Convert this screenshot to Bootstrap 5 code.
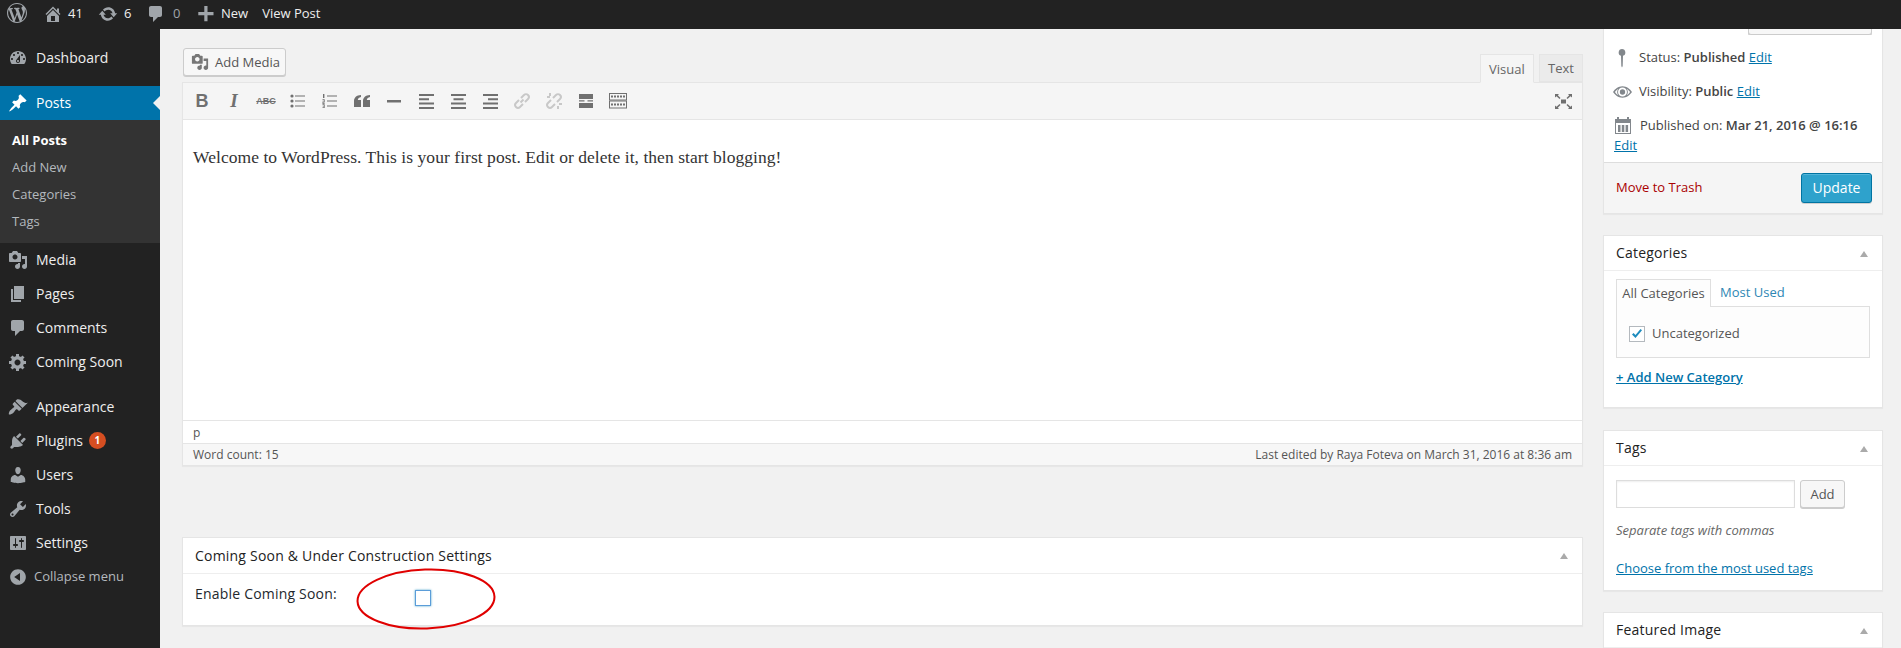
<!DOCTYPE html>
<html lang="en">
<head>
<meta charset="utf-8">
<title>Edit Post</title>
<link href="https://cdn.jsdelivr.net/npm/bootstrap@5.3.0/dist/css/bootstrap.min.css" rel="stylesheet">
<style>
html,body{height:648px;overflow:hidden;background:#f1f1f1;font-family:"Open Sans","Noto Sans",sans-serif;font-size:13px;color:#444}
svg{fill:currentColor;flex:none;display:block}
a{color:#0073aa}
.wp-top{height:29px;background:#222;color:#eee;font-size:13px;line-height:27px}
.wp-top .ti{color:#a0a5aa}
.wp-logo{margin:3px 16px 0 7px}
.wp-top .slot{display:flex;align-items:center;height:27px}
.wp-shell{height:619px}
.wp-side{width:160px;background:#222;flex:none;padding-top:12px}
.mi{height:34px;color:#eee;font-size:14px;padding:0 0 1px 36px;position:relative}
.mi svg{position:absolute;left:8px;top:7px;color:#a0a5aa}
.mi.sep{margin-bottom:11px}
.mi.cur{background:#0073aa;color:#fff}
.mi.cur svg{color:#fff}
.mi.cur::after{content:"";position:absolute;right:0;top:10px;border:7px solid transparent;border-right-color:#f1f1f1;border-left:0}
.subm{background:#333;color:#b4b9be;padding:7px 0 9px;height:123px}
.subm div{height:27px;line-height:26px;padding-left:12px}
.subm .on{color:#fff;font-weight:700}
.bub{width:17px;height:17px;border-radius:50%;background:#d54e21;color:#fff;font-size:10px;font-weight:700;line-height:17px;text-align:center;margin-left:6px}
.mi.coll{color:#b4b9be;font-size:13px;padding:0 0 0 34px}
.wp-main{padding:0 18px 0 22px;gap:20px;min-width:0}
.left-col{flex:1;min-width:0}
.right-col{width:280px;flex:none}
.top-row{height:34px;margin-top:19px}
.wbtn{height:28px;font-size:13px;line-height:26px;padding:0 9px;color:#555;background:#f7f7f7;border:1px solid #ccc;border-radius:3px;box-shadow:0 1px 0 #ccc}
.wbtn:hover{background:#f7f7f7}
.add-media{width:103px;padding:0 0 0 7px;gap:6px;align-self:flex-start;margin-left:1px}
.add-media svg{color:#777}
.etab{height:29px;line-height:28px;font-size:13px;color:#666;border:1px solid #e5e5e5;padding:0 8px;background:#ebebeb}
.etab.act{background:#f5f5f5;border-bottom-color:#f5f5f5;width:54px;height:29px;margin-right:5px;margin-bottom:-1px;position:relative;z-index:2}
.etab.off{width:44px;height:28px;line-height:27px}
.edit-box{background:#fff;border:1px solid #e5e5e5;border-radius:0;box-shadow:0 1px 1px rgba(0,0,0,.04)}
.tbar{height:37px;background:#f5f5f5;border-bottom:1px solid #e5e5e5;color:#707070;padding:0 10px 0 3px}
.tb{width:32px;height:20px;flex:none;display:flex;justify-content:center;align-items:center}
.tb.dim{color:#c8c8c8}
.tb-b{font:700 18px "Liberation Sans",sans-serif;color:#707070}
.tb-i{font:italic 700 19px "Liberation Serif",serif;color:#707070}
.tb-s{font:700 9px "Liberation Sans",sans-serif;text-decoration:line-through;color:#707070}
.edit-area{height:300px;padding:24px 10px 0;font:17.5px/26px "Liberation Serif",serif;letter-spacing:.05px;color:#333;margin:0}
.pth{height:23px;border-top:1px solid #e5e5e5;padding-left:10px;font-size:12px;line-height:24px;color:#555}
.stat{height:22px;background:#f7f7f7;border-top:1px solid #e5e5e5;padding:0 10px;font-size:12px;line-height:21px;color:#555}
.wpanel{border:1px solid #e5e5e5;border-radius:0;background:#fff;box-shadow:0 1px 1px rgba(0,0,0,.04)}
.p-head{height:35px;padding:0 12px 1px;border-bottom:1px solid #eee;font-size:14px;color:#222;font-weight:500;letter-spacing:.21px}
.caret-up{width:0;height:0;border:4px solid transparent;border-top:0;border-bottom:6px solid #aaa;margin:2px 2px 0 0}
.cs-box{margin-top:71px;height:89px;position:relative}
.cs-box .p-head{height:36px}
.cs-body{padding:9px 12px;color:#23282d;font-size:14px;font-weight:500;letter-spacing:.2px;line-height:22px}
.oval{position:absolute;left:172px;top:30px}
.cbx{width:16px;height:16px;border:1px solid #5b9dd9;box-shadow:0 0 2px rgba(30,140,190,.8);background:#fff;display:block;flex:none}
.cbx-row{padding-left:30px;padding-top:7px}
.pub{height:185px;margin-bottom:21px;border-top:0}
.pclip{height:6px;overflow:hidden;padding-right:10px;justify-content:flex-end;align-items:flex-end;display:flex}
.pclip .wbtn{width:124px;flex:none;font-size:13px;text-align:center;padding:0}
.prow{height:34px;padding-left:8px}
.pr0{margin-top:6px}
.ico-w{width:20px;display:flex;justify-content:center;margin-right:7px;color:#82878c}
.pub b{font-weight:600}
.pdate{padding:6px 10px 0;line-height:20px;height:53px}
.pdate .d1{display:flex;align-items:center}
.pact{height:51px;background:#f5f5f5;border-top:1px solid #ddd;padding:0 10px 0 12px}
.trash{color:#a00;text-decoration:none}
.upd{width:71px;height:30px;background:#2ea2cc;border:1px solid #0074a2;border-radius:3px;color:#fff;font-size:14px;line-height:28px;padding:0;box-shadow:inset 0 1px 0 rgba(120,200,230,.5),0 1px 0 rgba(0,0,0,.15)}
.upd:hover{background:#2ea2cc;color:#fff;border-color:#0074a2}
.cat{height:173px;margin-bottom:22px}
.pbody{padding:8px 12px 0}
.ctabs{height:28px}
.ctab{height:28px;line-height:27px;padding:0 5px;width:95px;text-align:center;border:1px solid #dfdfdf;border-bottom:0;background:#fdfdfd;color:#555;position:relative;z-index:1;margin-bottom:-1px}
.ctab2{padding-left:9px;line-height:27px;color:#2e87b4;text-decoration:none}
.cbox{height:52px;background:#fdfdfd;border:1px solid #dfdfdf;padding:3px 12px 0;gap:7px;color:#555;margin-top:-1px;width:254px}
.cchk{width:16px;height:16px;border:1px solid #b4b9be;background:#fff;color:#1e8cbe;flex:none}
.addcat{font-weight:600;display:block;margin-top:9px;line-height:20px}
.tagp{height:161px;margin-bottom:21px}
.tagp .pbody{padding-top:14px}
.tagin{width:179px;height:28px;border:1px solid #ddd;background:#fff;box-shadow:inset 0 1px 2px rgba(0,0,0,.07)}
.addb{width:45px;padding:0;text-align:center;margin-left:5px}
.hint{font-style:italic;color:#666;margin:12px 0 0;line-height:20px}
.choose{display:block;margin-top:18px;line-height:20px}
.feat{height:80px}
</style>
</head>
<body>
<div class="wp-top d-flex">
  <svg class="wp-logo" width="20" height="20" viewBox="0 0 20 20" style="color:#a0a5aa"><path d="M20 10c0-5.51-4.49-10-10-10C4.48 0 0 4.49 0 10c0 5.52 4.48 10 10 10 5.51 0 10-4.48 10-10zM7.78 15.37L4.37 6.22c.55-.02 1.17-.08 1.17-.08.5-.06.44-1.13-.06-1.11 0 0-1.45.11-2.37.11-.18 0-.37 0-.58-.01C4.12 2.69 6.87 1.11 10 1.11c2.33 0 4.45.87 6.05 2.34-.68-.11-1.65.39-1.65 1.58 0 .74.45 1.36.9 2.1.35.61.55 1.36.55 2.46 0 1.49-1.4 5-1.4 5l-3.03-8.37c.54-.02.82-.17.82-.17.5-.05.44-1.25-.06-1.22 0 0-1.44.12-2.38.12-.87 0-2.33-.12-2.33-.12-.5-.03-.56 1.2-.06 1.22l.92.08 1.26 3.41zM17.41 10c.24-.64.74-1.87.43-4.25.7 1.29 1.05 2.71 1.05 4.25 0 3.29-1.73 6.24-4.4 7.78.97-2.59 1.94-5.2 2.92-7.78zM6.1 18.09C3.12 16.65 1.11 13.53 1.11 10c0-1.3.23-2.48.72-3.59C3.25 10.3 4.67 14.2 6.1 18.09zm4.03-6.63l2.58 6.98c-.86.29-1.76.45-2.71.45-.79 0-1.57-.11-2.29-.33.81-2.38 1.62-4.74 2.42-7.1z"/></svg>
  <div class="slot ti"><svg width="20" height="20" viewBox="0 0 20 20"><path d="M16 8.5l1.53 1.53-1.06 1.06L10 4.62l-6.47 6.47-1.06-1.06L10 2.5l4 4v-2h2v4zm-6-2.46l6 5.99V18H4v-5.97zM12 17v-5H8v5h4z"/></svg></div>
  <div class="slot" style="margin-left:5px;width:30px">41</div>
  <div class="slot ti"><svg width="20" height="20" viewBox="0 0 20 20"><path d="M10.2 3.28c3.53 0 6.43 2.61 6.92 6h2.08l-3.5 4-3.5-4h2.32c-.45-1.97-2.21-3.45-4.32-3.45-1.45 0-2.73.71-3.54 1.78L4.95 5.66C6.23 4.2 8.11 3.28 10.2 3.28zm-.4 13.44c-3.52 0-6.43-2.61-6.92-6H.8l3.5-4c1.17 1.33 2.33 2.67 3.5 4H5.48c.45 1.97 2.21 3.45 4.32 3.45 1.45 0 2.73-.71 3.54-1.78l1.71 1.95c-1.28 1.46-3.15 2.38-5.25 2.38z"/></svg></div>
  <div class="slot" style="margin-left:6px;width:22px">6</div>
  <div class="slot ti"><svg width="20" height="20" viewBox="0 0 20 20"><path d="M5 2h9c1.1 0 2 .9 2 2v7c0 1.1-.9 2-2 2h-2l-5 5v-5H5c-1.1 0-2-.9-2-2V4c0-1.1.9-2 2-2z"/></svg></div>
  <div class="slot ti" style="margin-left:7px;width:23px">0</div>
  <div class="slot ti"><svg width="20" height="20" viewBox="0 0 20 20"><path d="M17.5 8v3.2h-6v6H8.3v-6h-6V8h6V2h3.2v6z"/></svg></div>
  <div class="slot" style="margin-left:5px">New</div>
  <div class="slot" style="margin-left:14px">View Post</div>
</div>
<div class="wp-shell d-flex">
  <nav class="wp-side">
    <div class="mi sep d-flex align-items-center"><svg width="20" height="20" viewBox="0 0 20 20"><path d="M3.76 16h12.48c1.1-1.37 1.76-3.11 1.76-5 0-4.42-3.58-8-8-8s-8 3.58-8 8c0 1.89.66 3.63 1.76 5zM10 4c.55 0 1 .45 1 1s-.45 1-1 1-1-.45-1-1 .45-1 1-1zM6 6c.55 0 1 .45 1 1s-.45 1-1 1-1-.45-1-1 .45-1 1-1zm8 0c.55 0 1 .45 1 1s-.45 1-1 1-1-.45-1-1 .45-1 1-1zm-5.37 5.55L12 7v6c0 1.1-.9 2-2 2s-2-.9-2-2c0-.57.24-1.08.63-1.45zM4 10c.55 0 1 .45 1 1s-.45 1-1 1-1-.45-1-1 .45-1 1-1zm12 0c.55 0 1 .45 1 1s-.45 1-1 1-1-.45-1-1 .45-1 1-1zm-5 3c0-.55-.45-1-1-1s-1 .45-1 1 .45 1 1 1 1-.45 1-1z"/></svg>Dashboard</div>
    <div class="mi cur d-flex align-items-center"><svg width="20" height="20" viewBox="0 0 20 20"><path d="M10.44 3.02l1.82-1.82 6.36 6.35-1.83 1.82c-1.05-.68-2.48-.57-3.41.36l-.75.75c-.92.93-1.04 2.35-.35 3.41l-1.83 1.82-2.41-2.41-2.8 2.79c-.42.42-3.38 2.71-3.8 2.29s1.86-3.39 2.28-3.81l2.79-2.79L4.1 9.36l1.83-1.82c1.05.69 2.48.57 3.4-.36l.75-.75c.93-.92 1.05-2.35.36-3.41z"/></svg>Posts</div>
    <div class="subm"><div class="on">All Posts</div><div>Add New</div><div>Categories</div><div>Tags</div></div>
    <div class="mi d-flex align-items-center"><svg width="20" height="20" viewBox="0 0 20 20"><path d="M13 11V4c0-.55-.45-1-1-1h-1.67L9 1H5L3.67 3H2c-.55 0-1 .45-1 1v7c0 .55.45 1 1 1h10c.55 0 1-.45 1-1zM7 4.5c1.38 0 2.5 1.12 2.5 2.5S8.38 9.5 7 9.5 4.5 8.38 4.5 7 5.62 4.5 7 4.5zM14 6h5v10.5c0 1.38-1.12 2.5-2.5 2.5S14 17.88 14 16.5s1.12-2.5 2.5-2.5c.17 0 .34.02.5.05V9h-3V6zm-4 8.05V13h2v3.5c0 1.38-1.12 2.5-2.5 2.5S7 17.88 7 16.5 8.12 14 9.5 14c.17 0 .34.02.5.05z"/></svg>Media</div>
    <div class="mi d-flex align-items-center"><svg width="20" height="20" viewBox="0 0 20 20"><path d="M6 15V2h10v13H6zm-1 1h8v2H3V5h2v11z"/></svg>Pages</div>
    <div class="mi d-flex align-items-center"><svg width="20" height="20" viewBox="0 0 20 20"><path d="M5 2h9c1.1 0 2 .9 2 2v7c0 1.1-.9 2-2 2h-2l-5 5v-5H5c-1.1 0-2-.9-2-2V4c0-1.1.9-2 2-2z"/></svg>Comments</div>
    <div class="mi sep d-flex align-items-center"><svg width="20" height="20" viewBox="0 0 20 20"><path d="M18 12h-2.18c-.17.7-.44 1.35-.81 1.93l1.54 1.54-2.1 2.1-1.54-1.54c-.58.36-1.23.63-1.91.79V19H8v-2.18c-.68-.16-1.33-.43-1.91-.79l-1.54 1.54-2.12-2.12 1.54-1.54c-.36-.58-.63-1.23-.79-1.91H1V9.03h2.17c.16-.7.44-1.35.8-1.94L2.43 5.55l2.1-2.1 1.54 1.54c.58-.37 1.24-.64 1.93-.81V2h3v2.18c.68.16 1.33.43 1.91.79l1.54-1.54 2.12 2.12-1.54 1.54c.36.59.64 1.24.8 1.94H18V12zm-8.5 1.5c1.66 0 3-1.34 3-3s-1.34-3-3-3-3 1.34-3 3 1.34 3 3 3z"/></svg>Coming Soon</div>
    <div class="mi d-flex align-items-center"><svg width="20" height="20" viewBox="0 0 20 20"><path d="M14.48 11.06L7.41 3.99l1.5-1.5c.5-.56 2.3-.47 3.51.32 1.21.8 1.43 1.28 2.91 2.1 1.18.64 2.45 1.26 4.45.85zm-.71.71L6.7 4.7 4.93 6.47c-.39.39-.39 1.02 0 1.41l1.06 1.06c.39.39.39 1.03 0 1.42-.6.6-1.43 1.11-2.21 1.69-.35.26-.7.53-1.01.84C1.43 13.23.4 17.08 1.07 17.5c.67.42 3.21-.64 4.35-1.78.32-.31.58-.66.84-1.01.58-.78 1.09-1.61 1.69-2.21.39-.39 1.02-.39 1.41 0l1.06 1.06c.39.39 1.02.39 1.41 0z"/></svg>Appearance</div>
    <div class="mi d-flex align-items-center"><svg width="20" height="20" viewBox="0 0 20 20"><path d="M13.11 4.36L9.87 7.6 8 5.73l3.24-3.24c.35-.34 1.05-.2 1.56.32.52.51.66 1.21.31 1.55zm-8 1.77l.91-1.12 9.01 9.01-1.19.84c-.71.71-2.63 1.16-3.82 1.16H6.14L4.9 17.26c-.59.59-1.54.59-2.12 0-.59-.58-.59-1.53 0-2.12l1.24-1.24v-3.88c0-1.13.4-3.19 1.09-3.89zm7.26 3.97l3.24-3.24c.34-.35 1.04-.21 1.55.31.52.51.66 1.21.31 1.55l-3.24 3.25z"/></svg>Plugins<span class="bub">1</span></div>
    <div class="mi d-flex align-items-center"><svg width="20" height="20" viewBox="0 0 20 20"><path d="M10 9.25c-2.27 0-2.73-3.44-2.73-3.44C7 4.02 7.82 2 9.97 2c2.16 0 2.98 2.02 2.71 3.81 0 0-.41 3.44-2.68 3.44zm0 2.57L12.72 10c2.39 0 4.52 2.33 4.52 4.53v2.49s-3.65 1.13-7.24 1.13c-3.65 0-7.24-1.13-7.24-1.13v-2.49c0-2.25 1.94-4.48 4.47-4.48z"/></svg>Users</div>
    <div class="mi d-flex align-items-center"><svg width="20" height="20" viewBox="0 0 20 20"><path d="M16.68 9.77c-1.34 1.34-3.3 1.67-4.95.99l-5.41 6.52c-.99.99-2.59.99-3.58 0s-.99-2.59 0-3.57l6.52-5.42c-.68-1.65-.35-3.61.99-4.95 1.28-1.28 3.12-1.62 4.72-1.06l-2.89 2.89 2.82 2.82 2.86-2.87c.53 1.58.18 3.39-1.08 4.67zM3.81 16.21c.4.39 1.04.39 1.43 0 .4-.4.4-1.04 0-1.43-.39-.4-1.03-.4-1.43 0-.39.39-.39 1.03 0 1.43z"/></svg>Tools</div>
    <div class="mi d-flex align-items-center"><svg width="20" height="20" viewBox="0 0 20 20"><path d="M18 16V4c0-.55-.45-1-1-1H3c-.55 0-1 .45-1 1v12c0 .55.45 1 1 1h14c.55 0 1-.45 1-1zM8 11h1c.55 0 1 .45 1 1s-.45 1-1 1H8v1.5c0 .28-.22.5-.5.5s-.5-.22-.5-.5V13H6c-.55 0-1-.45-1-1s.45-1 1-1h1V5.5c0-.28.22-.5.5-.5s.5.22.5.5V11zm5-2h-1c-.55 0-1-.45-1-1s.45-1 1-1h1V5.5c0-.28.22-.5.5-.5s.5.22.5.5V7h1c.55 0 1 .45 1 1s-.45 1-1 1h-1v5.5c0 .28-.22.5-.5.5s-.5-.22-.5-.5V9z"/></svg>Settings</div>
    <div class="mi coll d-flex align-items-center"><svg width="20" height="20" viewBox="0 0 20 20"><path d="M10 2.16c4.33 0 7.84 3.51 7.84 7.84s-3.51 7.84-7.84 7.84S2.16 14.33 2.16 10 5.71 2.16 10 2.16zm2 11.72V6.12L6.18 9.97z"/></svg>Collapse menu</div>
  </nav>
  <main class="wp-main d-flex flex-grow-1">
    <div class="left-col">
      <div class="top-row d-flex justify-content-between align-items-end">
        <button class="btn wbtn add-media d-flex align-items-center" type="button"><svg width="18" height="18" viewBox="0 0 20 20"><path d="M13 11V4c0-.55-.45-1-1-1h-1.67L9 1H5L3.67 3H2c-.55 0-1 .45-1 1v7c0 .55.45 1 1 1h10c.55 0 1-.45 1-1zM7 4.5c1.38 0 2.5 1.12 2.5 2.5S8.38 9.5 7 9.5 4.5 8.38 4.5 7 5.62 4.5 7 4.5zM14 6h5v10.5c0 1.38-1.12 2.5-2.5 2.5S14 17.88 14 16.5s1.12-2.5 2.5-2.5c.17 0 .34.02.5.05V9h-3V6zm-4 8.05V13h2v3.5c0 1.38-1.12 2.5-2.5 2.5S7 17.88 7 16.5 8.12 14 9.5 14c.17 0 .34.02.5.05z"/></svg>Add Media</button>
        <div class="d-flex align-items-end"><div class="etab act">Visual</div><div class="etab off">Text</div></div>
      </div>
      <div class="edit-box">
        <div class="tbar d-flex align-items-center">
          <span class="tb tb-b">B</span><span class="tb tb-i">I</span><span class="tb tb-s">ABC</span>
          <span class="tb"><svg width="16" height="14" viewBox="0 0 16 14"><circle cx="2" cy="2" r="1.6"/><circle cx="2" cy="7" r="1.6"/><circle cx="2" cy="12" r="1.6"/><path d="M5 1.5h10v1H5zM5 6.5h10v1H5zM5 11.5h10v1H5z"/></svg></span>
          <span class="tb"><svg width="16" height="14" viewBox="0 0 16 14"><path d="M1 0h1.4v4H1zM.5 5.2h2.2v3.2H1.3v.8h1.4v1H.5V7.5h1.4v-1.3H.5zM.5 10.5h2.2V14H.5v-.8h1.4v-.6H.8v-.7h1.1v-.6H.5zM5 1.5h10v1H5zM5 6.5h10v1H5zM5 11.5h10v1H5z"/></svg></span>
          <span class="tb"><svg width="16" height="12" viewBox="0 0 16 12"><path d="M7 0v2C5 2.400 4 3.500 3.800 5H7v7H0V6C0 2.500 2.500.3 7 0zM16 0v2c-2 .4-3 1.500-3.200 3H16v7H9V6c0-3.500 2.500-5.700 7-6z"/></svg></span>
          <span class="tb"><svg width="14" height="3" viewBox="0 0 14 3"><path d="M0 0h14v2.500H0z"/></svg></span>
          <span class="tb"><svg width="15" height="15" viewBox="0 0 15 15"><path d="M0 0h15v2H0zM0 4.300h10v2H0zM0 8.600h15v2H0zM0 12.900h15v2H0z"/></svg></span>
          <span class="tb"><svg width="15" height="15" viewBox="0 0 15 15"><path d="M0 0h15v2H0zM2.500 4.300h10v2h-10zM0 8.600h15v2H0zM0 12.900h15v2H0z"/></svg></span>
          <span class="tb"><svg width="15" height="15" viewBox="0 0 15 15"><path d="M0 0h15v2H0zM5 4.300h10v2H5zM0 8.600h15v2H0zM0 12.900h15v2H0z"/></svg></span>
          <span class="tb dim"><svg width="18" height="18" viewBox="0 0 18 18" style="fill:none;stroke:currentColor;stroke-width:2"><path d="M7.500 10.500l3-3M6 8l-3 3a2.800 2.800 0 004 4l3-3M12 10l3-3a2.800 2.800 0 00-4-4L8 6"/></svg></span>
          <span class="tb dim"><svg width="18" height="18" viewBox="0 0 18 18" style="fill:none;stroke:currentColor;stroke-width:2"><path d="M6 8l-3 3a2.800 2.800 0 004 4l3-3M12 10l3-3a2.800 2.800 0 00-4-4L8 6M2 5h3M5 1v3M13 14v3M14 12h3" /></svg></span>
          <span class="tb"><svg width="14" height="14" viewBox="0 0 14 14"><path d="M0 0h14v5H0zM0 6.300h5.500v1.300H0zM8.500 6.300H14v1.300H8.500zM0 9h14v5H0z"/></svg></span>
          <span class="tb"><svg width="18" height="16" viewBox="0 0 18 16" style="fill:none;stroke:currentColor"><rect x=".5" y=".5" width="17" height="6.500"/><rect x=".5" y="8" width="17" height="7"/><path d="M2 3.500h14M2 11.500h14" stroke-width="2" stroke-dasharray="2 1"/></svg></span>
          <span class="ms-auto"><svg width="17" height="15" viewBox="0 0 17 15"><path d="M6 5.500h5v4H6zM0 0h4L2.800 1.200 5.500 4 4.500 5 1.500 2.300 0 3.500zM17 0h-4l1.200 1.200L11.500 4l1 1 3-2.700L17 3.500zM0 15h4l-1.200-1.200L5.500 11l-1-1-3 2.700L0 11.500zM17 15h-4l1.200-1.200L11.500 11l1-1 3 2.700 1.500-1.200z"/></svg></span>
        </div>
        <p class="edit-area">Welcome to WordPress. This is your first post. Edit or delete it, then start blogging!</p>
        <div class="pth">p</div>
        <div class="stat d-flex justify-content-between"><span>Word count: 15</span><span>Last edited by Raya Foteva on March 31, 2016 at 8:36 am</span></div>
      </div>
      <section class="wpanel cs-box">
        <div class="p-head d-flex justify-content-between align-items-center"><span>Coming Soon &amp; Under Construction Settings</span><i class="caret-up"></i></div>
        <div class="cs-body d-flex"><span style="width:190px">Enable Coming Soon:</span><span class="cbx-row"><span class="cbx"></span></span></div>
        <svg class="oval" width="142" height="63" viewBox="0 0 142 63" style="fill:none"><ellipse cx="71" cy="31" rx="68.500" ry="29.500" stroke="#e00000" stroke-width="2" transform="rotate(-2 71 31)"/></svg>
      </section>
    </div>
    <aside class="right-col">
      <section class="wpanel pub">
        <div class="pclip"><button class="btn wbtn" type="button">Preview Changes</button></div>
        <div class="prow pr0 d-flex align-items-center"><span class="ico-w"><svg width="14" height="20" viewBox="0 0 14 20"><path d="M7 1a3.500 3.500 0 011 6.800l-.3 10.200L7 19.500 6.300 18 6 7.800A3.500 3.500 0 017 1z"/></svg></span><span>Status: <b>Published</b> <a href="#">Edit</a></span></div>
        <div class="prow d-flex align-items-center"><span class="ico-w"><svg width="19" height="14" viewBox="0 0 20 14"><path fill-rule="evenodd" d="M10 1c4.500 0 8 3 10 6-2 3-5.500 6-10 6S2 10 0 7c2-3 5.500-6 10-6zm0 1.300a4.700 4.700 0 100 9.400 4.700 4.700 0 000-9.400zM2 7c1 1.500 2.200 2.700 3.600 3.500a6 6 0 010-7C4.200 4.300 3 5.500 2 7zm16 0c-1-1.500-2.200-2.700-3.600-3.500a6 6 0 010 7c1.400-.8 2.600-2 3.600-3.500zM10 4.200a2.800 2.800 0 110 5.600 2.800 2.800 0 010-5.600z"/></svg></span><span>Visibility: <b>Public</b> <a href="#">Edit</a></span></div>
        <div class="pdate"><div class="d1"><span class="ico-w" style="width:17px;margin-right:9px"><svg width="16" height="17" viewBox="0 0 16 17"><path fill-rule="evenodd" d="M0 2h2V0h2v2h8V0h2v2h2v15H0zM1 6v10h14V6zM3 8h2.500v7H3zM6.800 8h2.500v7H6.800zM10.600 8h2.500v7h-2.500z"/></svg></span><span>Published on: <b>Mar 21, 2016 @ 16:16</b></span></div><a href="#">Edit</a></div>
        <div class="pact d-flex justify-content-between align-items-center"><a href="#" class="trash">Move to Trash</a><button class="btn upd" type="button">Update</button></div>
      </section>
      <section class="wpanel cat">
        <div class="p-head d-flex justify-content-between align-items-center"><span>Categories</span><i class="caret-up"></i></div>
        <div class="pbody">
          <div class="ctabs d-flex"><span class="ctab">All Categories</span><a href="#" class="ctab2">Most Used</a></div>
          <div class="cbox d-flex align-items-center"><span class="cchk"><svg width="14" height="14" viewBox="0 0 14 14"><path d="M5.500 11L2 7.500l1.500-1.500 2 2L10.500 2 12 3.200z"/></svg></span>Uncategorized</div>
          <a href="#" class="addcat">+ Add New Category</a>
        </div>
      </section>
      <section class="wpanel tagp">
        <div class="p-head d-flex justify-content-between align-items-center"><span>Tags</span><i class="caret-up"></i></div>
        <div class="pbody">
          <div class="d-flex"><input class="tagin" type="text" aria-label="Add tag"><button class="btn wbtn addb" type="button">Add</button></div>
          <p class="hint">Separate tags with commas</p>
          <a href="#" class="choose">Choose from the most used tags</a>
        </div>
      </section>
      <section class="wpanel feat">
        <div class="p-head d-flex justify-content-between align-items-center"><span>Featured Image</span><i class="caret-up"></i></div>
      </section>
    </aside>
  </main>
</div>
<script src="https://cdn.jsdelivr.net/npm/bootstrap@5.3.0/dist/js/bootstrap.bundle.min.js"></script>
</body>
</html>
